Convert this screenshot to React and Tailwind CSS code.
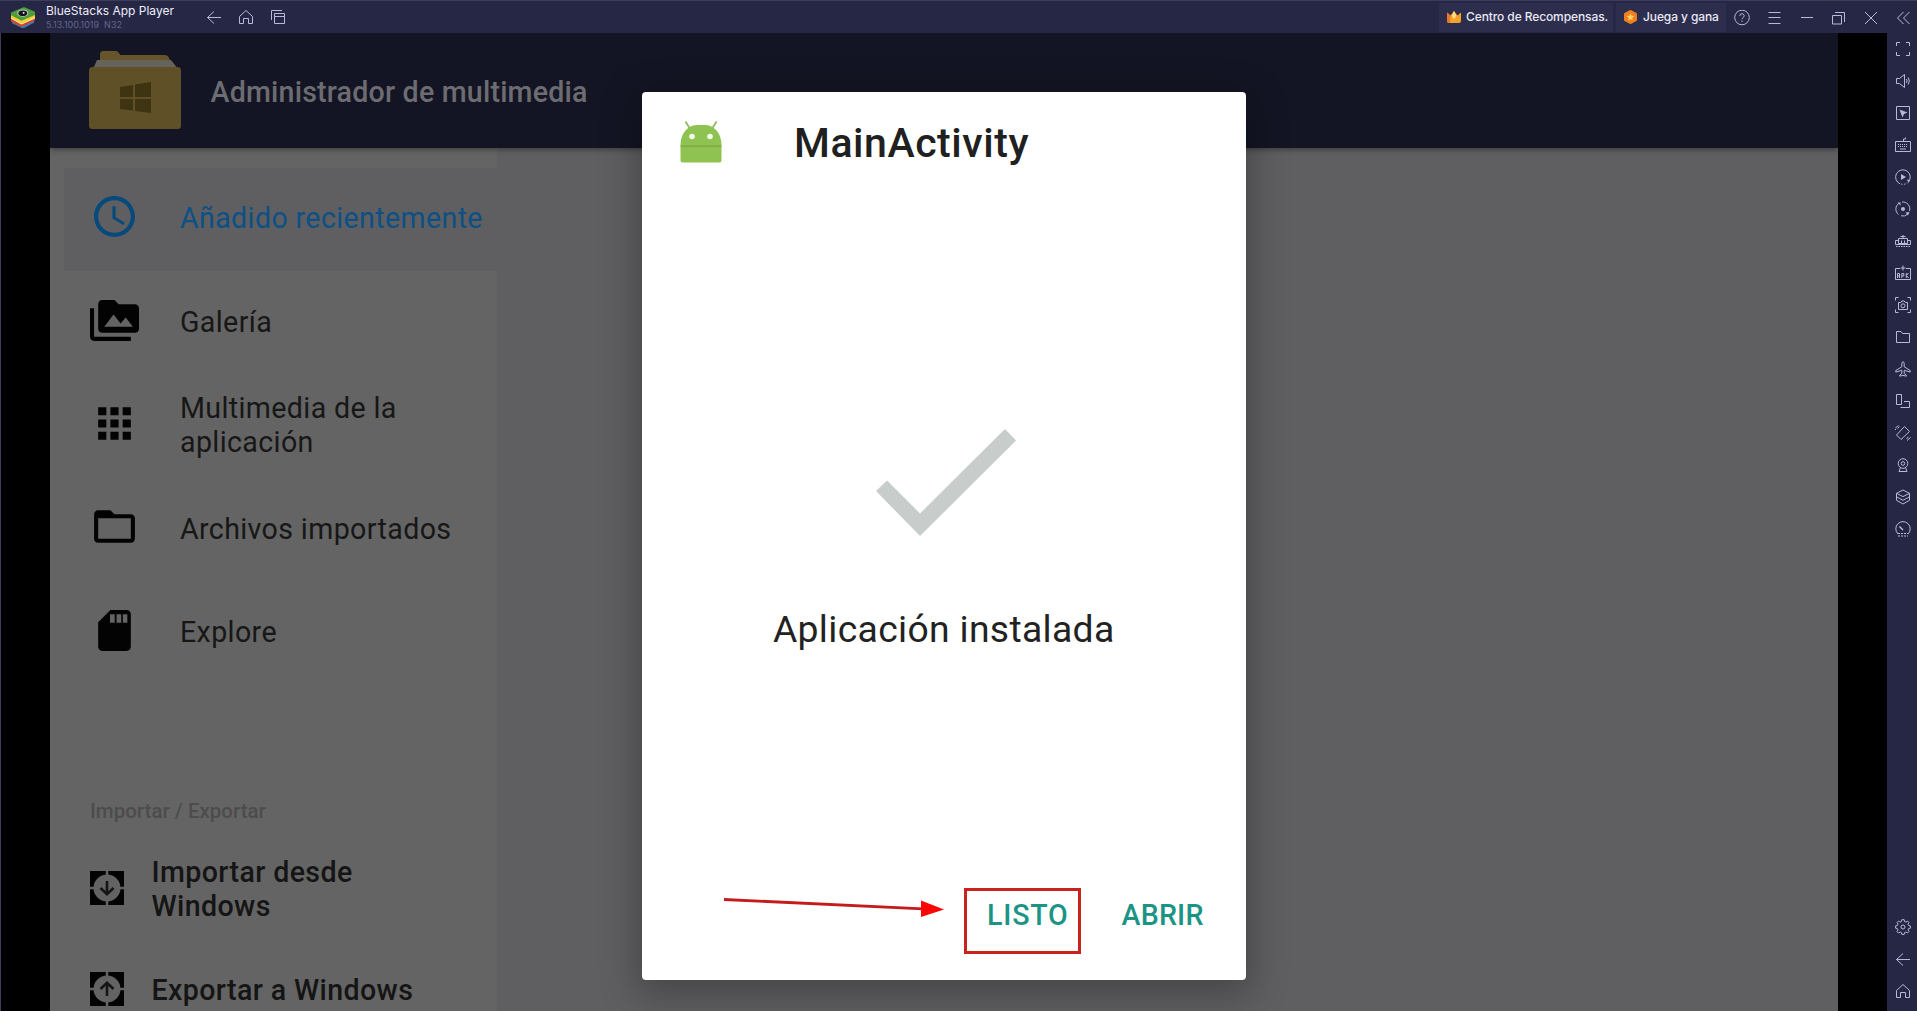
import React from "react";
import { MdAccessTime, MdPermMedia, MdApps, MdFolderOpen } from "react-icons/md";

const Icon = ({ children, size = 16 }) => (
  <svg
    width={size}
    height={size}
    viewBox={`0 0 ${size} ${size}`}
    fill="none"
    stroke="#b7b9dc"
    strokeWidth="1"
    className="shrink-0"
  >
    {children}
  </svg>
);

const Logo = () => (
  <svg width="24" height="21" viewBox="0 0 24 24" preserveAspectRatio="none" className="shrink-0">
    <path d="M1 14.500v4L11 24h2l10-6v-3.500z" fill="#3a7fa8" />
    <path d="M0 12v4.500L10.500 22.500 24 15.500v-4z" fill="#d8402f" />
    <path d="M0 11v2.500L10.500 20 24 13V10z" fill="#f3f0dc" />
    <path d="M0 8v4.500L10.500 19 24 12V7z" fill="#f3d22e" />
    <path d="M0 6.300v3L10.500 15.600 24 9V5.500L13 0z" fill="#4f9c3e" />
    <ellipse cx="11.800" cy="7" rx="5.600" ry="4.200" fill="#b9c2b8" />
    <ellipse cx="11.800" cy="7.200" rx="4.400" ry="3.200" fill="#14151d" />
    <circle cx="12.600" cy="6.600" r="1" fill="#fff" />
  </svg>
);

const BackArrow = () => (
  <Icon>
    <path d="M15 8.500H1.500M8 2.500l-6.500 6 6.500 6" />
  </Icon>
);

const Home = () => (
  <Icon>
    <path d="M1.500 7.500l6.500-6 6.500 6v7h-4v-5h-5v5h-4z" />
  </Icon>
);

const Crown = () => (
  <svg width="14" height="12" viewBox="0 0 14 12" className="shrink-0">
    <path d="M0 1.500l3.500 3L7 0l3.500 4.500L14 1.500V10q0 2-2 2H2q-2 0-2-2z" fill="#f6a12b" />
    <path d="M0 1.500l3.500 3L3 12H2q-2 0-2-2z" fill="#e8772a" />
    <path d="M7 0l2.200 4.500L7 8.500 4.800 4.500z" fill="#ffe08a" />
  </svg>
);

const Coin = () => (
  <svg width="13" height="14" viewBox="0 0 13 14" className="shrink-0">
    <path d="M6.500 0.300L12.500 3.500v7L6.500 13.700.5 10.500v-7z" fill="#ee7f22" stroke="#ee7f22" strokeLinejoin="round" />
    <path d="M6.500 3.500l1.100 2.300 2.500.3-1.800 1.800.4 2.500-2.200-1.200-2.200 1.200.4-2.500L2.900 6.100l2.500-.3z" fill="#ffd25e" />
  </svg>
);

const sideIcons = [
  <path d="M1.500 5V1.500H5M11 1.500h3.500V5M14.500 11v3.500H11M5 14.500H1.500V11" />,
  <>
    <path d="M1.500 5.500h3l5-4v13l-5-4h-3z" />
    <path d="M11.500 6q1.200 2 0 4M13.200 4.500q2.300 3.500 0 7" />
  </>,
  <>
    <path d="M1.500 1.500h13v13h-13z" />
    <path d="M4.500 4.500l8 3-3.500 1.500L7.500 12.500z" fill="#b7b9dc" stroke="none" />
  </>,
  <>
    <path d="M.5 4.500h15v10H.5zM8.500 4.500v-2.500h2V.5" />
    <path d="M3 7.500h10M3 9.500h10" strokeDasharray="1 1" />
    <path d="M5 12h6" />
  </>,
  <>
    <path d="M5 14.800A7.300 7.300 0 1 1 13.500 12.800" />
    <path d="M6 15a7 7 0 0 0 6.500-1.200" strokeDasharray="1.500 1.500" />
    <path d="M6 5l5 3-5 3zM12 10.500l3 .5-1.500 3z" fill="#b7b9dc" stroke="none" />
  </>,
  <>
    <path d="M3.500 13.500A7 7 0 0 1 4 2.200M7 1a7 7 0 0 1 7.500 9M12.500 13.300A7 7 0 0 1 6 14.800" />
    <circle cx="8" cy="8" r="2" fill="#b7b9dc" stroke="none" />
    <path d="M2.500 1.500h3v3zM13 14.500l-2.500-3 4-.5z" fill="#b7b9dc" stroke="none" />
  </>,
  <>
    <path d="M3.500 5.500h9v5h-9zM6.500 10V7.500M9.500 10V7.500M8 5V2M5.500 3.500h5M3 7.500H.5v4h15v-4H13" />
    <path d="M1 13.500h14" strokeDasharray="1.500 1" />
  </>,
  <>
    <path d="M5 3.500H.5v11h15v-11H11M8 .5v5M5.500 3h5" />
    <path d="M2.500 13V8.500h2V13M2.500 11h2M6.800 13V8.500h2v2.500h-2M11.300 8v5M13.500 8l-2 2.500 2 2.500" />
  </>,
  <>
    <path d="M.5 3.500v-3h3M12.500.5h3v3M15.500 12.500v3h-3M3.500 15.500h-3v-3" />
    <path d="M3.500 5.500h2.300l1-1.500h2.400l1 1.500h2.300v7h-9z" />
    <circle cx="8" cy="8.800" r="2" />
  </>,
  <path d="M1.500 2.500h4.500l1.500 2h7v9h-13z" />,
  <path d="M8 .8q1.200 0 1.200 2v3l6 3.700v1.600L9.200 9.300v3.200l2 1.500v1.200L8 14.300l-3.200.9V14l2-1.500V9.300l-6 1.800V9.500l6-3.700v-3q0-2 1.200-2z" />,
  <path d="M1.500 1.500h5v10h-5zM9 8.500h5.500v6h-9" />,
  <>
    <path d="M9.500 1.500l5 5-8.500 8-4.500-4.500z" />
    <path d="M.5 5V4M2.500 3.500l2-2M.5 3l3-2.500M12 15.500l3.500-3M11.500 13.500l2-1.500" />
  </>,
  <>
    <circle cx="8" cy="6.500" r="4.800" />
    <circle cx="8" cy="6.500" r="1.800" />
    <path d="M5.500 10.500L4 14.500h8l-1.500-4" />
  </>,
  <path d="M8 1l6.500 3.300L8 7.600 1.500 4.300zM1.500 4.300v7L8 15l6.500-3.700v-7M1.500 7.800L8 11.300l6.500-3.500" />,
  <>
    <path d="M3 13A7.200 7.200 0 1 1 13 13" />
    <path d="M4.500 5.500L8 9" strokeWidth="1.500" />
    <path d="M3 12.500h10M3 15h10" strokeDasharray="2 1" />
  </>,
];

const Gear = () => (
  <Icon>
    <path
      strokeLinejoin="round"
      d="M6.800.7h2.400l.4 1.900 1.300.5 1.700-1 1.400 1.500-1 1.600.6 1.300 1.800.4v2.300l-1.800.4-.6 1.300 1 1.600-1.500 1.500-1.600-1-1.300.5-.4 1.900H6.800l-.4-1.900-1.300-.5-1.700 1L2 12.500l1-1.600-.6-1.300-1.800-.4V6.900l1.800-.4L3 5.200 2 3.600l1.400-1.500 1.700 1 1.300-.5z"
    />
    <circle cx="8" cy="8" r="2" />
  </Icon>
);

const TitleBar = () => (
  <header className="flex h-[33px] shrink-0 items-center border-t border-[#3b3b5b] bg-[#262744] font-[Inter,sans-serif]">
    <div className="flex w-[206px] items-center pl-[11px]">
      <Logo />
      <div className="ml-[11px] flex flex-col">
        <span className="h-[14px] whitespace-nowrap text-[12px] leading-[14px] text-[#eeeefa]">
          BlueStacks App Player
        </span>
        <span className="h-[13px] whitespace-pre text-[9px] leading-[13px] text-[#62648b]">5.13.100.1019  N32</span>
      </div>
    </div>
    <div className="flex items-center gap-4">
      <BackArrow />
      <Home />
      <Icon>
        <path d="M1.500 11V1.500H12M4.500 4.500h10v10h-10zM4.500 7.500h10" />
      </Icon>
    </div>
    <div className="flex-1" />
    <div className="flex h-[29px] w-[174px] items-center bg-[#2d2e4d] pl-2">
      <Crown />
      <span className="ml-[5px] whitespace-nowrap text-[12px] font-medium tracking-[-0.1px] text-[#e8e8f4]">
        Centro de Recompensas.
      </span>
    </div>
    <div className="ml-[3px] flex h-[29px] w-[110px] items-center bg-[#2d2e4d] pl-2">
      <Coin />
      <span className="ml-[6px] whitespace-nowrap text-[12px] font-medium tracking-[-0.1px] text-[#e8e8f4]">
        Juega y gana
      </span>
    </div>
    <div className="ml-2 flex w-[183px] items-center gap-4 pt-px">
      <Icon>
        <circle cx="8" cy="7.500" r="7.300" />
        <path d="M5.800 6q0-2.300 2.200-2.300t2.200 2q0 1.200-1.200 1.900-1 .6-1 1.700M8 10.500v1.400" />
      </Icon>
      <Icon>
        <path d="M2.500 2.500h12M2.500 7.500h12M2.500 13.500h12" />
      </Icon>
      <Icon>
        <path d="M3 7.500h12" />
      </Icon>
      <Icon>
        <path d="M2.500 5.500h9v8.500h-9zM5 2.500h9.500V12" />
      </Icon>
      <Icon>
        <path d="M3 2l12 12M15 2L3 14" />
      </Icon>
      <Icon>
        <path d="M9.500 2L3.500 8l6 6M15.500 2l-6 6 6 6" />
      </Icon>
    </div>
  </header>
);

const SdCard = () => (
  <svg width="49" height="49" viewBox="0 0 24 24">
    <path
      fillRule="evenodd"
      fill="#030303"
      d="M18 2h-8L4 8v12c0 1.100.9 2 2 2h12c1.100 0 2-.9 2-2V4c0-1.100-.9-2-2-2zM9.800 4h2.300v4.200H9.800zM13 4h2.300v4.200H13zM16.100 4h2.200v4.200h-2.200z"
    />
  </svg>
);

const menu = [
  { icon: <MdAccessTime size={49} color="#064a7c" />, label: "Añadido recientemente", active: true },
  { icon: <MdPermMedia size={49} color="#030303" />, label: "Galería" },
  { icon: <MdApps size={49} color="#030303" />, label: "Multimedia de la aplicación" },
  { icon: <MdFolderOpen size={49} color="#030303" />, label: "Archivos importados" },
  { icon: <SdCard />, label: "Explore" },
];

const TransferIcon = ({ up }) => (
  <svg width="34" height="34" viewBox="0 0 34 34" className="mb-[2px] shrink-0">
    <path fill="#030303" d="M0 0h34v34H0z" />
    <circle cx="17" cy="17" r="13.500" fill="#636363" />
    <path d="M17 0v6M17 28v6M0 17h6M28 17h6" stroke="#636363" strokeWidth="2.500" />
    <path
      d={up ? "M17 24V11.500M10.500 17L17 10.800l6.500 6.200" : "M17 10v12.500M10.500 17l6.500 6.200 6.500-6.200"}
      fill="none"
      stroke="#161616"
      strokeWidth="2.600"
    />
  </svg>
);

const Sidebar = () => (
  <nav className="flex w-[447px] flex-col bg-[#646464] pt-[20px]">
    {menu.map((m) => (
      <div
        key={m.label}
        className={
          "flex h-[103.400px] shrink-0 items-center " +
          (m.active ? "ml-[14px] bg-[#5f5f61] pl-[26px] text-[#0c5085]" : "pl-10 text-[#171717]")
        }
      >
        <div className="mb-[5px] shrink-0">{m.icon}</div>
        <span className="ml-[41px] w-[310px] text-[28.600px] leading-[33.500px] tracking-[0.370px]">{m.label}</span>
      </div>
    ))}
    <h2 className="mt-[115px] h-[24px] shrink-0 pl-10 text-[20.500px] leading-[24px] font-medium text-[#4c4c4c]">
      Importar / Exportar
    </h2>
    <div className="mt-[15px] flex h-[101px] shrink-0 items-center pl-10 text-[28.600px] leading-[34px] font-medium tracking-[0.380px] text-[#151515]">
      <TransferIcon />
      <span className="ml-[27.500px] w-[230px]">Importar desde Windows</span>
    </div>
    <div className="flex h-[101px] shrink-0 items-center pl-10 text-[28.600px] leading-[34px] font-medium tracking-[0.380px] text-[#151515]">
      <TransferIcon up />
      <span className="ml-[27.500px] whitespace-nowrap">Exportar a Windows</span>
    </div>
  </nav>
);

const FolderLogo = () => (
  <svg width="92" height="78" viewBox="0 0 92 78" className="shrink-0">
    <path d="M11 20V4q0-4 4-4h11q3 0 5 4h44q4 0 5 3l6 13z" fill="#66552a" />
    <path d="M8 9h74l7 9H4z" fill="#66635a" />
    <path d="M11 9V4q0-4 4-4h11q3 0 5 4h44q4 0 5 5z" fill="#66552a" />
    <rect y="16" width="92" height="62" rx="3.500" fill="#5f5027" />
    <path d="M31 36l13-2v12H31zM46 33.500l16-2.500v15H46zM31 48h13v11.500L31 58zM46 48h16v14l-16-2z" fill="#3f3412" />
  </svg>
);

const AndroidHead = () => (
  <svg width="42" height="42" viewBox="0 0 42 42" className="mb-[2px] shrink-0">
    <path d="M5.500.5l5 8M36.500.5l-5 8" stroke="#93b860" strokeWidth="1.800" />
    <path d="M.5 24C.5 11 9 4 17 4h8c8 0 16.500 7 16.500 20v15.500q0 2-2 2h-37q-2 0-2-2z" fill="#8fc351" />
    <path d="M.5 25.200h41" stroke="#7ba646" strokeWidth="1.300" />
    <circle cx="12" cy="15.500" r="2.800" fill="#f4faec" />
    <circle cx="30" cy="15.500" r="2.800" fill="#f4faec" />
  </svg>
);

const InstallDialog = () => (
  <section className="absolute top-[58.500px] left-[592px] flex h-[888.500px] w-[603.500px] flex-col rounded-[4px] bg-white shadow-[0_10px_36px_6px_rgba(0,0,0,0.260)]">
    <div className="flex h-[103px] items-center pl-[38px]">
      <AndroidHead />
      <h1 className="ml-[72px] text-[41px] leading-[48px] font-medium tracking-[0.550px] text-[#202020]">MainActivity</h1>
    </div>
    <svg width="140" height="107" viewBox="0 0 140 107" className="mt-[234.500px] ml-[234px]">
      <path d="M0 62L11 51.500 44 84.500 129 0 140 11.500 44 107z" fill="#c8cccb" />
    </svg>
    <p className="mt-[71px] text-center text-[37.300px] leading-[44px] tracking-[0.330px] text-[#222222]">
      Aplicación instalada
    </p>
    <div className="mt-[236.500px] flex justify-end text-[28.600px] leading-[34px] font-medium text-[#1c9485]">
      <div className="h-[66px] w-[117px] border-[3px] border-[#c8231f] pt-[7px] pl-[20.500px] tracking-[0.800px]">LISTO</div>
      <div className="mr-[39px] ml-[41px] w-[85px] pt-[10px] tracking-[0.200px]">ABRIR</div>
    </div>
    <svg width="222" height="20" viewBox="0 0 222 20" className="absolute top-[806px] left-[81px]">
      <path d="M1 1.500L200 10.800" stroke="#c41b1b" strokeWidth="2.800" />
      <path d="M198 2.500v16.500l23-7.500z" fill="#fb0505" />
    </svg>
  </section>
);

const AppScreen = () => (
  <main className="relative flex w-[1788px] flex-col overflow-hidden bg-[#5f5f61] font-[Roboto,sans-serif]">
    <div className="z-10 flex h-[114.500px] shrink-0 items-center bg-[#141524] pl-[38.500px] shadow-[0_2px_5px_rgba(0,0,0,0.350)]">
      <FolderLogo />
      <span className="mt-[3px] ml-[30px] text-[28.600px] leading-[34px] font-medium tracking-[0.200px] text-[#6c6c71]">
        Administrador de multimedia
      </span>
    </div>
    <Sidebar />
    <div className="absolute inset-0 z-20">
      <InstallDialog />
    </div>
  </main>
);

export default function App() {
  return (
    <div className="flex h-[1011px] w-[1917px] flex-col overflow-hidden bg-[#262744]">
      <TitleBar />
      <div className="flex min-h-0 flex-1">
        <div className="w-[50px] shrink-0 border-l border-[#3b3b5b] bg-black" />
        <AppScreen />
        <div className="w-[49px] shrink-0 bg-black" />
        <aside className="flex flex-1 flex-col bg-[#262744] pb-1 pl-2">
          {sideIcons.map((glyph, i) => (
            <div key={i} className="flex h-8 items-center">
              <Icon>{glyph}</Icon>
            </div>
          ))}
          <div className="flex-1" />
          <div className="flex h-8 items-center">
            <Gear />
          </div>
          <div className="flex h-8 items-center">
            <BackArrow />
          </div>
          <div className="flex h-8 items-center">
            <Home />
          </div>
        </aside>
      </div>
    </div>
  );
}
